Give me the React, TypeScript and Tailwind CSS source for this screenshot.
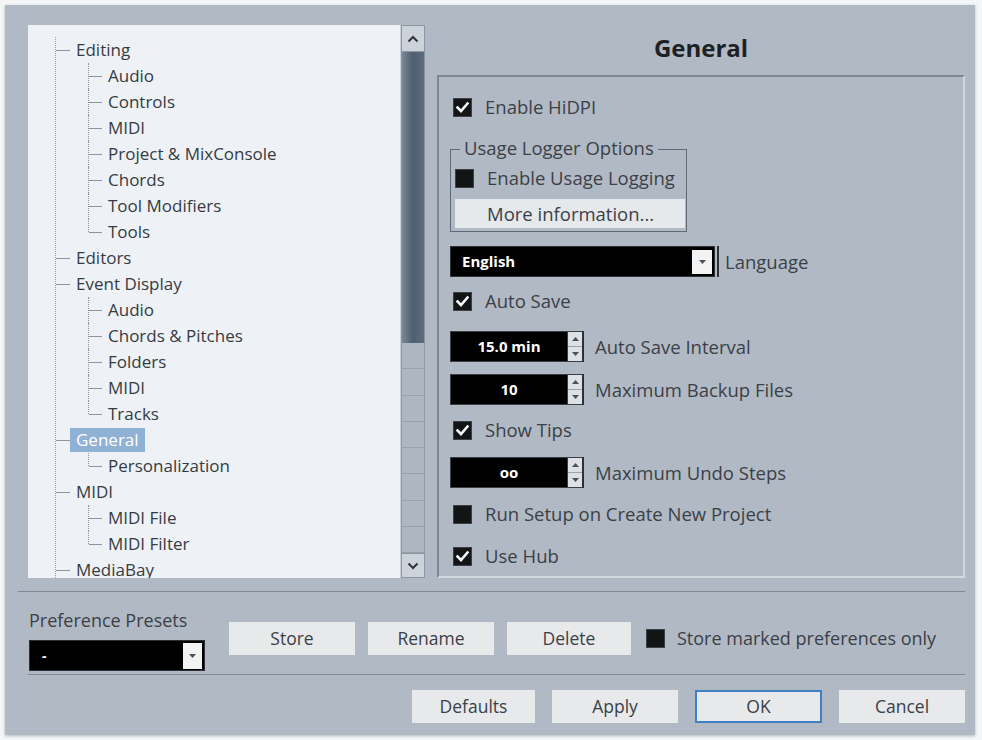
import React from 'react'

type Node = { label: string; level: 0 | 1; last?: boolean; selected?: boolean }

const tree: Node[] = [
  { label: 'Editing', level: 0 },
  { label: 'Audio', level: 1 },
  { label: 'Controls', level: 1 },
  { label: 'MIDI', level: 1 },
  { label: 'Project & MixConsole', level: 1 },
  { label: 'Chords', level: 1 },
  { label: 'Tool Modifiers', level: 1 },
  { label: 'Tools', level: 1, last: true },
  { label: 'Editors', level: 0 },
  { label: 'Event Display', level: 0 },
  { label: 'Audio', level: 1 },
  { label: 'Chords & Pitches', level: 1 },
  { label: 'Folders', level: 1 },
  { label: 'MIDI', level: 1 },
  { label: 'Tracks', level: 1, last: true },
  { label: 'General', level: 0, selected: true },
  { label: 'Personalization', level: 1, last: true },
  { label: 'MIDI', level: 0 },
  { label: 'MIDI File', level: 1 },
  { label: 'MIDI Filter', level: 1, last: true },
  { label: 'MediaBay', level: 0 },
]

const font = { fontFamily: '"Open Sans", "Liberation Sans", sans-serif' }

function Check({ on }: { on: boolean }) {
  return (
    <span className="w-[19px] h-[19px] bg-[#121416] border border-[#3c4147] flex items-center justify-center shrink-0">
      {on && (
        <svg width="15" height="15" viewBox="0 0 15 15">
          <path d="M2.5 7.5 L6 11 L12.5 3.5" stroke="#f4f6f8" strokeWidth="2.6" fill="none" strokeLinecap="square" />
        </svg>
      )}
    </span>
  )
}

function Arrow({ dir }: { dir: 'up' | 'down' }) {
  return (
    <svg width="7" height="4" viewBox="0 0 7 4">
      {dir === 'up' ? <path d="M0 4 L3.5 0 L7 4 Z" fill="#4a5058" /> : <path d="M0 0 L3.5 4 L7 0 Z" fill="#4a5058" />}
    </svg>
  )
}

function Spin({ value }: { value: string }) {
  return (
    <div className="flex h-[31px] w-[134px] shrink-0">
      <div className="flex-1 bg-black border border-[#3a3f45] flex items-center justify-center text-white text-[15px] font-bold">
        {value}
      </div>
      <div className="w-[14px] flex flex-col bg-[#dde1e5] border-y border-[#3a3f45]">
        <div className="flex-1 flex items-center justify-center border-b border-[#9aa2ab]">
          <Arrow dir="up" />
        </div>
        <div className="flex-1 flex items-center justify-center">
          <Arrow dir="down" />
        </div>
      </div>
      <div className="w-[2px] bg-[#2c3136]" />
    </div>
  )
}

function Btn({ children, w = 'w-[126px]', ok = false }: { children: React.ReactNode; w?: string; ok?: boolean }) {
  return (
    <div
      className={`${w} h-[33px] flex items-center justify-center bg-[#e7e9eb] text-[17.5px] text-[#3b4047] ${
        ok ? 'border-2 border-[#3f7fc4]' : ''
      }`}
    >
      {children}
    </div>
  )
}

function Tree() {
  return (
    <div className="relative w-[372px] h-[553px] bg-[#eef2f6] overflow-hidden text-[17px]">
      <div className="absolute left-[27px] top-[12px] bottom-0 border-l border-dotted border-[#9aa1a8]" />
      <div className="pt-[12px]">
        {tree.map((n, i) => (
          <div key={i} className="relative h-[26px] flex items-center">
            {n.level === 0 ? (
              <>
                <span className="ml-[28px] w-[14px] border-t border-[#8e959c]" />
                <span
                  className={`px-[6px] h-[24px] flex items-center ${
                    n.selected ? 'bg-[#8fb1d6] text-white' : 'text-[#363b41]'
                  }`}
                >
                  {n.label}
                </span>
              </>
            ) : (
              <>
                <span
                  className={`absolute left-[60px] top-0 border-l border-dotted border-[#8e959c] ${
                    n.last ? 'h-[13px]' : 'h-[26px]'
                  }`}
                />
                <span className="ml-[61px] w-[13px] border-t border-[#8e959c]" />
                <span className="ml-[6px] text-[#363b41]">{n.label}</span>
              </>
            )}
          </div>
        ))}
      </div>
    </div>
  )
}

function Scrollbar() {
  return (
    <div className="w-[25px] h-[553px] flex flex-col bg-[#aeb7c1] border-l border-[#c9d0d7]">
      <div className="h-[27px] bg-[#ccd3da] border border-[#8d97a2] flex items-center justify-center">
        <svg width="12" height="8" viewBox="0 0 12 8">
          <path d="M1.5 6.5 L6 2 L10.5 6.5" stroke="#2f353b" strokeWidth="2" fill="none" />
        </svg>
      </div>
      <div className="h-[291px] bg-gradient-to-r from-[#7a8896] via-[#4f5f70] to-[#5e6d7c] border-x border-[#8894a0]" />
      <div className="flex-1 flex flex-col border-x border-[#8f99a4]">
        {Array.from({ length: 8 }).map((_, i) => (
          <div key={i} className="flex-1 border-b border-[#98a2ad]" />
        ))}
      </div>
      <div className="h-[25px] bg-[#ccd3da] border border-[#8d97a2] flex items-center justify-center">
        <svg width="12" height="8" viewBox="0 0 12 8">
          <path d="M1.5 1.5 L6 6 L10.5 1.5" stroke="#2f353b" strokeWidth="2" fill="none" />
        </svg>
      </div>
    </div>
  )
}

function GeneralPanel() {
  return (
    <div className="flex-1 flex flex-col">
      <div className="h-[50px] pb-[5px] flex items-center justify-center text-[24px] font-bold text-[#1d2126]">General</div>
      <div className="flex-1 border-2 border-[#7c8792] border-r-[#d2d8de] border-b-[#d2d8de] px-[11px] pt-[19px] text-[18.5px] text-[#3b4047]">
        <div className="flex items-center gap-[13px] h-[22px] pl-[3px]">
          <Check on />
          <span>Enable HiDPI</span>
        </div>

        <div className="relative mt-[31px] w-[237px] h-[83px] border border-[#5f6a75] pt-[10px] pl-[4px] pr-[1px]">
          <span className="absolute -top-[13px] left-[9px] px-[4px] bg-[#b1bac4] leading-[22px]">Usage Logger Options</span>
          <div className="flex items-center gap-[13px] h-[22px] mt-[7px]">
            <Check on={false} />
            <span>Enable Usage Logging</span>
          </div>
          <div className="mt-[10px] h-[29px] bg-[#e6e9ec] flex items-center pl-[32px]">More information...</div>
        </div>

        <div className="flex items-center mt-[14px]">
          <div className="w-[265px] h-[31px] bg-black border border-[#2c3136] flex items-center pr-[2px]">
            <span className="flex-1 pl-[11px] text-white text-[15px] font-bold">English</span>
            <span className="w-[20px] h-[24px] bg-[#f1f3f5] flex items-center justify-center">
              <Arrow dir="down" />
            </span>
          </div>
          <span className="ml-[2px] w-[2px] h-[31px] bg-[#2c3136]" />
          <span className="ml-[6px]">Language</span>
        </div>

        <div className="flex items-center gap-[13px] h-[22px] pl-[3px] mt-[13px]">
          <Check on />
          <span>Auto Save</span>
        </div>

        <div className="flex items-center mt-[19px]">
          <Spin value="15.0 min" />
          <span className="ml-[11px]">Auto Save Interval</span>
        </div>
        <div className="flex items-center mt-[12px]">
          <Spin value="10" />
          <span className="ml-[11px]">Maximum Backup Files</span>
        </div>

        <div className="flex items-center gap-[13px] h-[22px] pl-[3px] mt-[14px]">
          <Check on />
          <span>Show Tips</span>
        </div>

        <div className="flex items-center mt-[16px]">
          <Spin value="oo" />
          <span className="ml-[11px]">Maximum Undo Steps</span>
        </div>

        <div className="flex items-center gap-[13px] h-[22px] pl-[3px] mt-[15px]">
          <Check on={false} />
          <span>Run Setup on Create New Project</span>
        </div>

        <div className="flex items-center gap-[13px] h-[22px] pl-[3px] mt-[20px]">
          <Check on />
          <span>Use Hub</span>
        </div>
      </div>
    </div>
  )
}

export default function App() {
  return (
    <div className="w-[982px] h-[740px] bg-[#f4f5f6] pt-[5px] pl-[5px]" style={font}>
      <div className="w-[970px] h-[730px] bg-[#b1bac4] shadow-[0_1px_3px_rgba(0,0,0,0.25)] flex flex-col">
        <div className="flex pt-[20px] pl-[23px] pr-[10px]">
          <div className="flex">
            <Tree />
            <Scrollbar />
          </div>
          <div className="ml-[12px] flex-1 flex">
            <GeneralPanel />
          </div>
        </div>

        <div className="mt-[13px] ml-[13px] mr-[10px] border-t border-[#7f8a95]" />

        <div className="flex items-start pl-[24px] pt-[17px] h-[82px]">
          <div className="flex flex-col w-[176px]">
            <span className="text-[18px] text-[#3b4047] leading-[22px]">Preference Presets</span>
            <div className="mt-[9px] h-[31px] bg-black border border-[#2c3136] flex items-center pr-[2px]">
              <span className="flex-1 pl-[12px] text-white text-[14px] font-bold leading-none">-</span>
              <span className="w-[19px] h-[26px] bg-[#f1f3f5] flex items-center justify-center">
                <Arrow dir="down" />
              </span>
            </div>
          </div>
          <div className="flex items-center gap-[13px] ml-[24px] mt-[13px]">
            <Btn>Store</Btn>
            <Btn>Rename</Btn>
            <Btn w="w-[124px]">Delete</Btn>
            <div className="flex items-center gap-[12px] ml-[2px] text-[18px] text-[#3b4047]">
              <Check on={false} />
              <span>Store marked preferences only</span>
            </div>
          </div>
        </div>

        <div className="ml-[23px] mr-[10px] border-t border-[#7f8a95]" />

        <div className="flex justify-end gap-[17px] pr-[10px] pt-[15px]">
          <Btn w="w-[123px]">Defaults</Btn>
          <Btn>Apply</Btn>
          <Btn w="w-[127px]" ok>
            OK
          </Btn>
          <Btn>Cancel</Btn>
        </div>
      </div>
    </div>
  )
}
